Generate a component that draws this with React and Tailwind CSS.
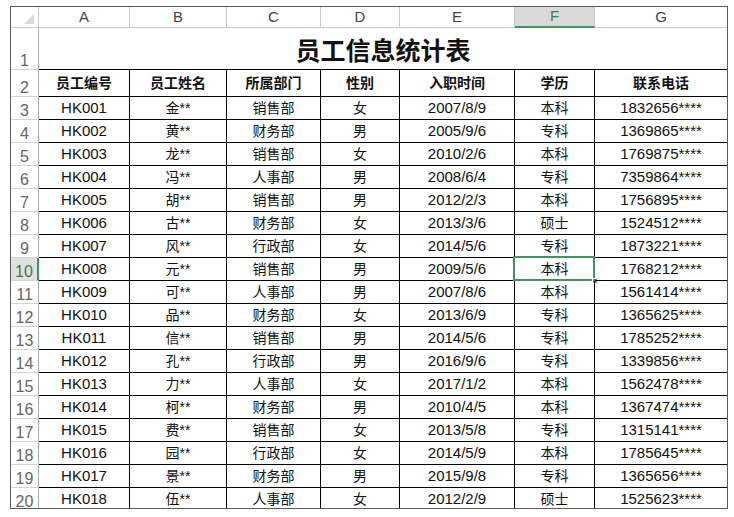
import React from 'react';

const rows = [
  ['HK001', '金**', '销售部', '女', '2007/8/9', '本科', '1832656****'],
  ['HK002', '黄**', '财务部', '男', '2005/9/6', '专科', '1369865****'],
  ['HK003', '龙**', '销售部', '女', '2010/2/6', '本科', '1769875****'],
  ['HK004', '冯**', '人事部', '男', '2008/6/4', '专科', '7359864****'],
  ['HK005', '胡**', '销售部', '男', '2012/2/3', '本科', '1756895****'],
  ['HK006', '古**', '财务部', '女', '2013/3/6', '硕士', '1524512****'],
  ['HK007', '风**', '行政部', '女', '2014/5/6', '专科', '1873221****'],
  ['HK008', '元**', '销售部', '男', '2009/5/6', '本科', '1768212****'],
  ['HK009', '可**', '人事部', '男', '2007/8/6', '本科', '1561414****'],
  ['HK010', '品**', '财务部', '女', '2013/6/9', '专科', '1365625****'],
  ['HK011', '信**', '销售部', '男', '2014/5/6', '专科', '1785252****'],
  ['HK012', '孔**', '行政部', '男', '2016/9/6', '专科', '1339856****'],
  ['HK013', '力**', '人事部', '女', '2017/1/2', '本科', '1562478****'],
  ['HK014', '柯**', '财务部', '男', '2010/4/5', '本科', '1367474****'],
  ['HK015', '费**', '销售部', '女', '2013/5/8', '专科', '1315141****'],
  ['HK016', '园**', '行政部', '女', '2014/5/9', '本科', '1785645****'],
  ['HK017', '景**', '财务部', '男', '2015/9/8', '专科', '1365656****'],
  ['HK018', '伍**', '人事部', '女', '2012/2/9', '硕士', '1525623****'],
];

const headers = ['员工编号', '员工姓名', '所属部门', '性别', '入职时间', '学历', '联系电话'];
const letters = ['A', 'B', 'C', 'D', 'E', 'F', 'G'];

// selected cell: F10
const SEL_ROW = 10;
const SEL_COL = 5;

const hasCjk = (s) => /[\u4e00-\u9fff]/.test(s);

const RowHead = ({ n, h }) => {
  const sel = n === SEL_ROW;
  return (
    <div
      className={`${h} flex items-end justify-center leading-none text-[16px] border-b border-[#d4d4d4] ${
        sel ? 'bg-[#e1e1e1] text-[#3f7a55] border-r-2 border-r-[#4a8f63]' : 'bg-white text-[#666] border-r border-r-[#ababab]'
      }`}
    >
      <span>{n}</span>
    </div>
  );
};

const Cell = ({ children, last, sel }) => (
  <div
    className={`relative h-[23px] flex items-center justify-center text-[#111] border-b border-black ${
      last ? '' : 'border-r'
    } ${hasCjk(children) ? 'text-[14px]' : 'text-[15px]'}`}
  >
    {children}
    {sel && (
      <>
        <div className="absolute -left-[2px] -top-[2px] -right-[1px] -bottom-[1px] border-2 border-[#4a8f63]" />
        <div className="absolute -right-[4px] -bottom-[4px] w-[6px] h-[6px] bg-[#4a8f63] border border-white" />
      </>
    )}
  </div>
);

export default function App() {
  return (
    <div className="w-[734px] h-[517px] bg-white pl-[10px] pt-[6px] font-['Liberation_Sans','Noto_Sans_CJK_SC',sans-serif]">
      <div className="w-[718px] h-[503px] border border-[#5a5a5a] overflow-hidden">
        <div className="grid grid-cols-[28px_91px_97px_94px_79px_115px_80px_132px]">
          {/* column letters */}
          <div className="h-[21px] border-r border-b border-[#c8c8c8] bg-white">
            <svg width="27" height="20" viewBox="0 0 27 20">
              <polygon points="23,7 23,17 13,17" fill="#d9d9d9" />
            </svg>
          </div>
          {letters.map((l, i) => (
            <div
              key={l}
              className={`h-[21px] flex items-center justify-center text-[15px] ${
                i === SEL_COL
                  ? 'bg-[#d9d9d9] text-[#3f7a55] border-b-2 border-b-[#4a8f63] border-r border-r-[#c8c8c8]'
                  : `bg-white text-[#444] border-b border-[#c8c8c8] ${i === 6 ? '' : 'border-r'}`
              }`}
            >
              {l}
            </div>
          ))}

          {/* row 1: title */}
          <RowHead n={1} h="h-[42px]" />
          <div className="col-span-7 h-[42px] flex items-center justify-center pt-[2px] border-b border-black text-[25px] font-bold text-[#111] font-['Noto_Sans_CJK_SC',sans-serif]">
            员工信息统计表
          </div>

          {/* row 2: headers */}
          <RowHead n={2} h="h-[27px]" />
          {headers.map((t, i) => (
            <div
              key={t}
              className={`h-[27px] flex items-center justify-center text-[14px] font-bold text-[#111] border-b border-black ${
                i === 6 ? '' : 'border-r'
              }`}
            >
              {t}
            </div>
          ))}

          {rows.map((r, ri) => {
            const n = ri + 3;
            return (
              <React.Fragment key={n}>
                <RowHead n={n} h="h-[23px]" />
                {r.map((v, ci) => (
                  <Cell key={ci} last={ci === 6} sel={n === SEL_ROW && ci === SEL_COL}>
                    {v}
                  </Cell>
                ))}
              </React.Fragment>
            );
          })}
        </div>
      </div>
    </div>
  );
}
